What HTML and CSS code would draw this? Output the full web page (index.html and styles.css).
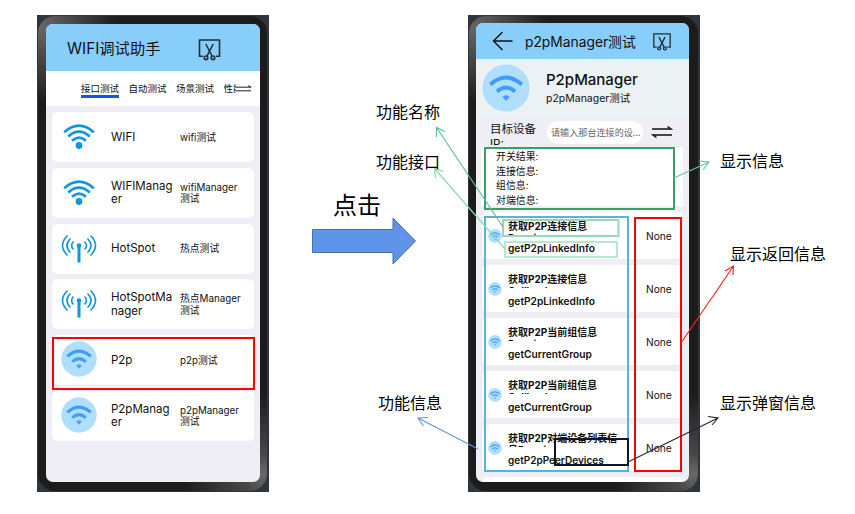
FILE: index.html
```
<!DOCTYPE html>
<html lang="zh-CN">
<head>
<meta charset="utf-8">
<title>WIFI调试助手</title>
<link rel="stylesheet" href="styles.css">
</head>
<body>
<svg class="defs" width="0" height="0">
  <symbol id="wifi" viewBox="0 0 32 26">
    <g fill="none" stroke="#1296db" stroke-width="2.7">
      <path d="M1.2 8.2Q16 -4.8 30.8 8.2"/><path d="M5.2 12.6Q16 2.8 26.8 12.6"/><path d="M9 16.8Q16 10.4 23 16.8"/>
    </g>
    <circle cx="16" cy="21.5" r="3.4" fill="#1296db"/>
  </symbol>
  <symbol id="hotspot" viewBox="0 0 36 30">
    <g fill="none" stroke="#1296db" stroke-width="1.6">
      <path d="M6.5 1.500Q-3.500 11.500 6.500 21.500M9.500 4.500Q2.500 11.500 9.500 18.500M12.500 7.500Q8.500 11.500 12.500 15.500"/>
      <path d="M29.500 1.500Q39.500 11.500 29.500 21.500M26.500 4.500Q33.500 11.500 26.500 18.500M23.500 7.500Q27.500 11.500 23.500 15.500"/>
    </g>
    <circle cx="18" cy="11.500" r="2.300" fill="#1296db"/><path d="M16.500 11.500h3V28.500h-3z" fill="#1296db"/>
  </symbol>
  <symbol id="badge" viewBox="0 0 48 48">
    <circle cx="24" cy="24" r="23.6" fill="#b0deff"/>
    <g fill="none" stroke="#409cfc" stroke-width="4">
      <path d="M8.3 20.5Q24 6.5 39.7 20.5"/><path d="M15 27.5Q24 19.5 33 27.5"/>
    </g>
    <path d="M20.3 33Q24 29.7 27.7 33L24 36.8z" fill="#409cfc"/>
  </symbol>
  <symbol id="cut" viewBox="0 0 22 22">
    <g fill="none" stroke="#20303a" stroke-width="1.6">
      <path d="M4.500 17.300H1V1h20v16.300h-3.500"/><path d="M7.300 5L13.500 17M14.700 5L8.500 17"/>
      <circle cx="7.500" cy="18.800" r="1.800"/><circle cx="14.500" cy="18.800" r="1.800"/>
    </g>
  </symbol>
  <symbol id="swap" viewBox="0 0 22 14">
    <path d="M1 4H20L16.5 1.5M21 10H2L5.5 12.5" fill="none" stroke="#111" stroke-width="1.5"/>
  </symbol>
</svg>
<main class="board">
  <section class="phone">
    <div class="bezel"><div class="screen">
      <header class="bar"><h1>WIFI调试助手</h1><svg class="bar-cut"><use href="#cut"/></svg></header>
      <nav class="tabs"><span class="tab on">接口测试</span><span class="tab">自动测试</span><span class="tab">场景测试</span><span class="tab last">性能</span><svg class="tab-swap" viewBox="0 0 16 8"><path d="M0 2.2H15L12 .6M0 5.8H15" fill="none" stroke="#222" stroke-width="1"/></svg></nav>
      <div class="cards">
        <article class="card"><svg class="i-wifi"><use href="#wifi"/></svg><b>WIFI</b><p>wifi测试</p></article>
        <article class="card"><svg class="i-wifi"><use href="#wifi"/></svg><b>WIFIManag<br>er</b><p>wifiManager<br>测试</p></article>
        <article class="card"><svg class="i-hot"><use href="#hotspot"/></svg><b>HotSpot</b><p>热点测试</p></article>
        <article class="card"><svg class="i-hot"><use href="#hotspot"/></svg><b>HotSpotMa<br>nager</b><p>热点Manager<br>测试</p></article>
        <article class="card"><svg class="i-badge"><use href="#badge"/></svg><b>P2p</b><p>p2p测试</p></article>
        <article class="card"><svg class="i-badge"><use href="#badge"/></svg><b>P2pManag<br>er</b><p>p2pManager<br>测试</p></article>
      </div>
    </div></div>
  </section>
  <section class="phone second">
    <div class="bezel"><div class="screen">
      <header class="bar"><svg class="back" viewBox="0 0 21 20"><path d="M20.5 10H1.5M10.5 1L1.5 10L10.5 19" fill="none" stroke="#111" stroke-width="1.4"/></svg><h1>p2pManager测试</h1><svg class="bar-cut"><use href="#cut"/></svg></header>
      <div class="intro"><svg><use href="#badge"/></svg><div><h2>P2pManager</h2><p>p2pManager测试</p></div></div>
      <div class="target"><label>目标设备<br>IP:</label><span class="field">请输入那台连接的设...</span><svg><use href="#swap"/></svg></div>
      <div class="result"><p>开关结果:</p><p>连接信息:</p><p>组信息:</p><p>对端信息:</p></div>
      <div class="list">
        <article class="row"><svg><use href="#badge"/></svg><div><h3>获取P2P连接信息<br>Promise</h3><p>getP2pLinkedInfo</p></div><span>None</span></article>
        <article class="row"><svg><use href="#badge"/></svg><div><h3>获取P2P连接信息<br>Callback</h3><p>getP2pLinkedInfo</p></div><span>None</span></article>
        <article class="row"><svg><use href="#badge"/></svg><div><h3>获取P2P当前组信息<br>Promise</h3><p>getCurrentGroup</p></div><span>None</span></article>
        <article class="row"><svg><use href="#badge"/></svg><div><h3>获取P2P当前组信息<br>Callback</h3><p>getCurrentGroup</p></div><span>None</span></article>
        <article class="row"><svg><use href="#badge"/></svg><div><h3>获取P2P对端设备列表信<br>息Promise</h3><p class="long">getP2pPeerDevices</p></div><span>None</span></article>
        <article class="row"></article>
      </div>
    </div></div>
  </section>
  <svg class="marks" viewBox="0 0 855 514" fill="none">
    <path d="M312.5 229.5H393V218L415.500 241L393 264V252.500H312.500Z" fill="#5e95e6" stroke="#466fad"/>
    <rect x="53" y="338" width="201" height="51" stroke="#f00" stroke-width="2"/>
    <rect x="485" y="148" width="189" height="61" stroke="#36a06c" stroke-width="2"/>
    <rect x="485" y="217" width="143" height="254" stroke="#56b4e4" stroke-width="2"/>
    <rect x="635" y="218" width="46" height="253" stroke="#f00" stroke-width="2"/>
    <rect x="503" y="220" width="115.500" height="16" stroke="#92dab8" stroke-width="2"/>
    <rect x="505" y="242" width="112" height="15" stroke="#b5e8d0" stroke-width="2"/>
    <rect x="555" y="439" width="73" height="26" stroke="#101426" stroke-width="2"/>
    <g stroke-width="1.15">
    <path d="M503 227L436.500 127.500M436.500 137V127.500L445 131.500" stroke="#55c591"/>
    <path d="M505 249L434.500 168.500M435.500 178L434.500 168.500L443.500 171.500" stroke="#8bd8b3"/>
    <path d="M674 178L709 162M699 161L709 162L703 170" stroke="#65c69a"/>
    <path d="M681 343L733.500 266M725 271L733.500 266L733 275" stroke="#f22"/>
    <path d="M628 462L718 418M708 416.500L718 418L712 425" stroke="#252638"/>
    <path d="M478 449L418 418M428 417.500L418 418L423.500 426" stroke="#6196e5"/>
    </g>
  </svg>
  <span class="note click">点击</span>
  <span class="note n1">功能名称</span>
  <span class="note n2">功能接口</span>
  <span class="note n3">功能信息</span>
  <span class="note n4">显示信息</span>
  <span class="note n5">显示返回信息</span>
  <span class="note n6">显示弹窗信息</span>
</main>
</body>
</html>
```
FILE: styles.css
```
* { box-sizing: border-box; margin: 0; padding: 0; }
body { background: #fff; color: #111; font-family: Inter, "Noto Sans CJK SC", sans-serif; overflow: hidden; }
.defs { position: absolute; }
svg { display: block; flex: none; }
.board { position: relative; width: 855px; height: 514px; display: flex; gap: 199px; padding: 15px 0 0 37px; }
.phone { width: 232px; height: 477px; flex: none; background: #30343f; padding: 1px 2px 1px 1px; }
.bezel { height: 100%; border-radius: 17px; padding: 8px 7px 9px 8px; background: radial-gradient(circle at 225px 458px, #6a6a6a 0, #484848 20px, #1c1c1c 80px, transparent 81px), radial-gradient(circle at 5px 12px, #666 0, #1c1c1c 75px); }
.screen { height: 100%; border-radius: 7px; overflow: hidden; background: #eeeef4; }
.second .bezel { padding: 7px 9px 9px 7px; }
h1, h2, b { font-weight: 400; }
.bar { height: 47px; background: #87cefa; display: flex; align-items: center; padding-left: 21px; }
.bar h1 { font-size: 15.3px; width: 131px; white-space: nowrap; line-height: 20px; padding-top: 3px; }
.bar-cut { width: 23px; height: 22px; margin-top: 4px; }
.tabs { height: 35px; background: #fff; display: flex; padding: 9px 0 0 35px; gap: 9.500px; }
.tab { width: 38px; height: 18px; font-size: 9.500px; line-height: 17px; white-space: nowrap; overflow: hidden; flex: none; }
.on { border-bottom: 3px solid #0a59f7; }
.last { width: 12px; }
.tab-swap { width: 16px; height: 8px; margin: 5px 0 0 -9.500px; }
.cards { padding: 6px 6px 0; display: flex; flex-direction: column; gap: 5.800px; }
.card { height: 50px; border-radius: 6px; background: #fff; display: grid; grid-template-columns: 59px 69px 1fr; align-items: center; }
.card b { font-size: 11.500px; line-height: 13.500px; padding-top: 1px; }
.card p { font-size: 9.800px; line-height: 11.500px; padding-top: 1px; }
.i-wifi { width: 32px; height: 26px; margin-left: 11px; }
.i-hot { width: 36px; height: 30px; margin: 0 0 0 9px; }
.i-badge { width: 36px; height: 36px; margin: 0 0 2px 9px; }
.second .bar { height: 36px; padding-left: 16px; }
.back { width: 21px; height: 20px; }
.second .bar h1 { font-size: 13.800px; margin-left: 12px; width: 128px; padding: 2px 0 0; }
.second .bar-cut { width: 18px; height: 18px; margin-top: 2px; }
.intro { height: 59px; background: #ecf1f4; display: flex; align-items: center; padding: 0 0 1px 6px; gap: 16px; }
.intro svg { width: 48px; height: 48px; }
.intro h2 { font-size: 15px; line-height: 20px; font-weight: 500; padding-top: 2px; }
.intro p { font-size: 10.500px; line-height: 18px; }
.target { height: 29px; display: flex; padding: 4px 0 0 14px; }
.target label { width: 57px; height: 23px; overflow: hidden; font-size: 11.500px; line-height: 14.500px; }
.field { width: 96px; height: 23px; border-radius: 12px; background: #fff; color: #666; font-size: 9.100px; line-height: 24px; padding-left: 4px; white-space: nowrap; overflow: hidden; margin-top: -1px; }
.target svg { width: 22px; height: 14px; margin: 3px 0 0 8px; }
.result { height: 59px; background: #fff; margin: 0 6px 0 5px; padding: 2px 0 0 15px; font-size: 9.900px; line-height: 14.600px; }
.list { padding: 6px 7px 0 6px; display: flex; flex-direction: column; gap: 6px; }
.row { height: 47px; flex: none; border-radius: 5px; background: #fff; display: grid; grid-template-columns: 26px 138px 1fr; align-items: center; }
.row > svg { width: 14px; height: 14px; margin-left: 6px; }
.row h3 { height: 15px; overflow: hidden; font-size: 10px; line-height: 12px; white-space: nowrap; font-weight: 700; margin: 3px 0 7px; }
.row p { font-size: 10.200px; line-height: 13px; font-weight: 600; white-space: nowrap; }
.row .long { font-size: 10px; }
.row span { font-size: 10.200px; }
.marks { position: absolute; left: 0; top: 0; width: 855px; height: 514px; }
.note { position: absolute; font-size: 16px; line-height: 20px; white-space: nowrap; color: #000; font-family: "Noto Sans CJK SC", sans-serif; }
.click { left: 333px; top: 189px; font-size: 24px; line-height: 30px; }
.n1 { left: 376px; top: 101px; }
.n2 { left: 376px; top: 151px; }
.n3 { left: 378px; top: 392px; }
.n4 { left: 720px; top: 150px; }
.n5 { left: 730px; top: 243px; }
.n6 { left: 720px; top: 392px; }
```
